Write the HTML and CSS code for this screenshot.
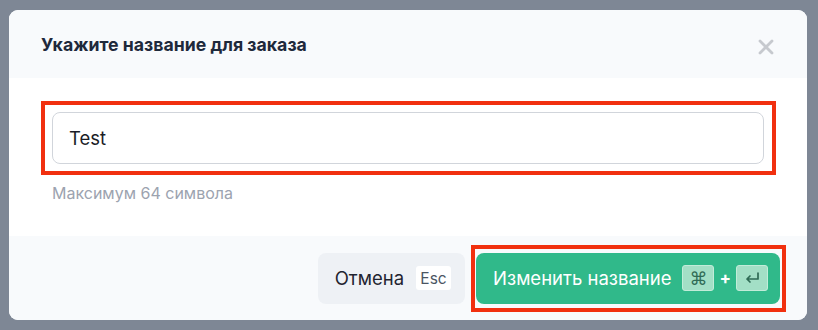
FILE: index.html
```
<!DOCTYPE html>
<html lang="ru">
<head>
    <meta charset="UTF-8">
    <meta name="viewport" content="width=device-width, initial-scale=1.0">
    <title>Название заказа</title>
    <link rel="stylesheet" href="styles.css">
</head>
<body>
    <!-- Rename Order Modal -->
    <div class="modal">
        <header class="modal-header">
            <h2>Укажите название для заказа</h2>
            <button class="close-btn" aria-label="Закрыть">
                <svg width="16" height="16" viewBox="0 0 16 16">
                    <path d="M2 2 L14 14 M14 2 L2 14" stroke="#c6c9ce" stroke-width="2.8" stroke-linecap="round"/>
                </svg>
            </button>
        </header>

        <div class="modal-body">
            <div class="highlight highlight-input">
                <input type="text" class="name-input" value="Test" maxlength="64">
            </div>
            <p class="hint">Максимум 64 символа</p>
        </div>

        <footer class="modal-footer">
            <button class="cancel-btn">
                Отмена <kbd class="key key-light">Esc</kbd>
            </button>
            <div class="highlight highlight-btn">
                <button class="submit-btn">
                    Изменить название
                    <span class="shortcut">
                        <kbd class="key key-green">⌘</kbd>
                        <span class="plus">+</span>
                        <kbd class="key key-green">
                            <svg width="15" height="12" viewBox="0 0 15 12">
                                <path d="M13 1 V7 H2 M5 4 L2 7 L5 10" fill="none" stroke="#2f6b55" stroke-width="1.7" stroke-linecap="round" stroke-linejoin="round"/>
                            </svg>
                        </kbd>
                    </span>
                </button>
            </div>
        </footer>
    </div>
</body>
</html>
```

FILE: styles.css
```
/* Base */
body {
    margin: 0;
    padding: 10px 11px 10px 9px;
    background-color: #7e8795;
    font-family: 'Inter', 'Noto Sans', sans-serif;
    color: #1e293b;
}

/* Modal */
.modal {
    background-color: white;
    border-radius: 9px;
    overflow: hidden;
    height: 310px;
    display: flex;
    flex-direction: column;
}

.modal-header {
    display: flex;
    align-items: center;
    justify-content: space-between;
    height: 68px;
    padding: 0 33px 0 32px;
    background-color: #f8fafc;
}

.modal-header h2 {
    margin: 0;
    font-size: 17.7px;
    font-weight: 700;
    color: #1e293b;
}

.close-btn {
    background: none;
    border: none;
    padding: 0;
    width: 16px;
    height: 16px;
    display: flex;
    align-items: center;
    justify-content: center;
    margin-top: 6px;
    cursor: pointer;
}

/* Body */
.modal-body {
    padding: 23px 31px 0 32px;
    height: 135px;
}

/* Red annotation boxes */
.highlight {
    border: 4px solid #f1300f;
    box-sizing: border-box;
}

.highlight-input {
    padding: 7px 8px 7px 7px;
}

.highlight-btn {
    padding: 4px 2px 4px 1px;
}

.name-input {
    display: block;
    width: 100%;
    height: 52px;
    box-sizing: border-box;
    padding: 0 16px;
    border: 1px solid #d1d5db;
    border-radius: 8px;
    font-family: inherit;
    font-size: 18.5px;
    color: #1a1d26;
    outline: none;
}

.hint {
    margin: 8px 0 0 11px;
    font-size: 16px;
    color: #9ca3af;
}

/* Footer */
.modal-footer {
    flex-grow: 1;
    display: flex;
    align-items: center;
    justify-content: flex-end;
    gap: 6px;
    padding: 0 21px 0 0;
    background-color: #f8fafc;
}

.cancel-btn,
.submit-btn {
    display: flex;
    align-items: center;
    height: 51px;
    border: none;
    border-radius: 8px;
    font-family: inherit;
    font-size: 18.5px;
    cursor: pointer;
}

.cancel-btn {
    gap: 12px;
    padding: 0 14px 0 17px;
    background-color: #eef1f5;
    color: #1f2430;
}

.submit-btn {
    gap: 11px;
    padding: 0 12px 0 17px;
    background-color: #30b98a;
    color: white;
}

.shortcut {
    display: flex;
    align-items: center;
    gap: 5px;
}

.plus {
    font-size: 17px;
    font-weight: 700;
}

.key {
    display: flex;
    align-items: center;
    justify-content: center;
    box-sizing: border-box;
    border-radius: 3px;
    font-family: inherit;
}

.key-light {
    width: 35px;
    height: 24px;
    background-color: white;
    font-size: 15.5px;
    color: #4b5563;
}

.key-green {
    width: 32px;
    height: 26px;
    background-color: #a3dfc6;
    border: 1px solid #c2ecd9;
    font-family: 'DejaVu Sans', sans-serif;
    font-size: 18px;
    color: #2f6b55;
}
```
